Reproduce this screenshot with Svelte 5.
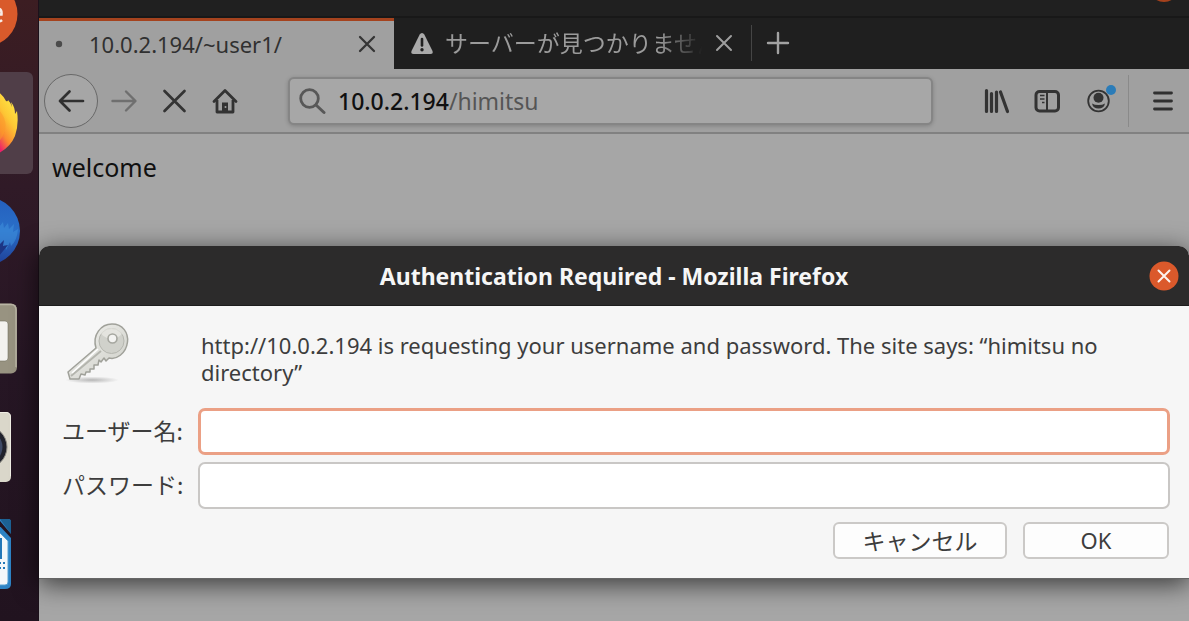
<script>
  let username = $state('');
  let password = $state('');
</script>

<div class="desktop">
  <nav class="dock" aria-label="Dock">
    <button aria-label="Software">
      <svg width="39" height="66" viewBox="0 0 39 66">
        <circle cx="-15" cy="14" r="32.5" fill="#d95a2b" />
        <path d="M-2 8.500Q2 9 1.500 14.500H-3M-3 21.500Q0 22 2 20" fill="none" stroke="#f7ece6" stroke-width="2.500" />
      </svg>
    </button>
    <button class="current" aria-label="Firefox">
      <svg width="33" height="102" viewBox="0 0 33 102">
        <defs>
          <linearGradient id="flame" x1=".8" y1="0" x2=".3" y2="1">
            <stop offset="0" stop-color="#fff04a" />
            <stop offset=".45" stop-color="#fdc835" />
            <stop offset=".75" stop-color="#fb8a30" />
            <stop offset="1" stop-color="#ec1f6b" />
          </linearGradient>
        </defs>
        <path d="M-3 19Q3 23 6 29Q8 30 8 28Q11 31 12 35L11 30Q15 35 15 42L17 39Q19 53 15 64Q10 76 -3 82Z" fill="url(#flame)" />
        <path d="M-2 37Q9 49 4 61Q2 67 -2 70Z" fill="#fc9a29" opacity=".55" />
      </svg>
    </button>
    <button aria-label="Thunderbird">
      <svg width="39" height="102" viewBox="0 0 39 102">
        <defs>
          <linearGradient id="bird" x1="0" y1="0" x2="0" y2="1">
            <stop offset="0" stop-color="#245fbd" />
            <stop offset=".5" stop-color="#2a6fc8" />
            <stop offset="1" stop-color="#1f3f98" />
          </linearGradient>
        </defs>
        <circle cx="-14" cy="51" r="34" fill="url(#bird)" />
        <path d="M-1 47L3 42L4 48L8 43L9 49L14 44L13 52L18 49Q17 61 11 66L10 62L6 70L5 65L-1 73Z" fill="#3d8edb" opacity=".6" />
        <path d="M-1 65L4 60L3 66L8 65L-1 76Z" fill="#1c3585" />
      </svg>
    </button>
    <button aria-label="Files">
      <svg width="39" height="102" viewBox="0 0 39 102">
        <rect x="-20" y="15.500" width="37" height="70" rx="6" fill="#989381" />
        <path d="M-1 16.500H11Q16 16.500 16 22V79" fill="none" stroke="#b8b4a4" stroke-width="1.500" />
        <rect x="-20" y="33" width="28" height="40" rx="3" fill="#f3f2ef" stroke="#777363" stroke-width=".6" />
      </svg>
    </button>
    <button aria-label="Rhythmbox">
      <svg width="39" height="102" viewBox="0 0 39 102">
        <rect x="-30" y="16" width="41" height="70" rx="5" fill="#dad7ca" />
        <path d="M-1 16.500H6Q10.500 16.500 10.500 21V80" fill="none" stroke="#efede4" />
        <circle cx="-14" cy="51" r="21" fill="#20222c" stroke="#8e8c84" />
        <circle cx="-14" cy="51" r="16.500" fill="#3d4965" />
      </svg>
    </button>
    <button aria-label="LibreOffice Writer">
      <svg width="39" height="102" viewBox="0 0 39 102">
        <path d="M-2 15H8Q11 15 11 18V80Q11 85 5 85H-2Z" fill="#2d83c5" />
        <path d="M0 15H8Q11 15 11 18V30Z" fill="#1c6193" />
        <path d="M-2 20L11 34V30L0 17" fill="#241420" />
        <path d="M-2 27L8 37V78Q8 81 5 81H-2Z" fill="#f3f7fa" stroke="#57a1d4" />
        <path d="M-1 35H1V55M-1 59H1M3 59H5M-1 64H1M3 64H5" fill="none" stroke="#2377b8" stroke-width="2" />
      </svg>
    </button>
  </nav>

  <main class="browser">
    <div class="titlebar"><i></i></div>

    <div class="tabs">
      <div class="tab active">
        <svg class="favicon" width="24" height="24" viewBox="0 0 24 24"><circle cx="12" cy="12" r="3.200" fill="#4b4b4b" /></svg>
        <span class="name">10.0.2.194/~user1/</span>
        <button aria-label="Close tab">
          <svg width="24" height="24" viewBox="0 0 24 24"><path d="M5 5L19 19M19 5L5 19" stroke="#353535" stroke-width="2.300" stroke-linecap="round" /></svg>
        </button>
      </div>
      <div class="tab failed">
        <svg class="favicon" width="24" height="24" viewBox="0 0 24 24">
          <path d="M12 2Q13.500 2 14.300 3.500L22.500 20Q23.500 23 20.500 23H3.500Q.5 23 1.500 20L9.700 3.500Q10.500 2 12 2Z" fill="#aaa" />
          <path d="M12 8V14.500" stroke="#202020" stroke-width="2.600" stroke-linecap="round" />
          <circle cx="12" cy="18.700" r="1.700" fill="#202020" />
        </svg>
        <span class="name">サーバーが見つかりません</span>
        <button aria-label="Close tab">
          <svg width="24" height="24" viewBox="0 0 24 24"><path d="M5 5L19 19M19 5L5 19" stroke="#9e9e9e" stroke-width="2" stroke-linecap="round" /></svg>
        </button>
      </div>
      <button class="new-tab" aria-label="New tab">
        <svg width="24" height="24" viewBox="0 0 24 24"><path d="M12 2V22M2 12H22" stroke="#a2a2a2" stroke-width="2.400" stroke-linecap="round" /></svg>
      </button>
    </div>

    <div class="toolbar">
      <button class="back" aria-label="Back">
        <svg width="28" height="28" viewBox="0 0 28 28"><path d="M26 14H3M12.500 4.500L3 14L12.500 23.500" fill="none" stroke="#303030" stroke-width="2.700" stroke-linecap="round" stroke-linejoin="round" /></svg>
      </button>
      <button class="tool" aria-label="Forward">
        <svg width="28" height="28" viewBox="0 0 28 28"><path d="M2.500 14H25M16 4.500L25.500 14L16 23.500" fill="none" stroke="#6f6f6f" stroke-width="2.400" stroke-linecap="round" stroke-linejoin="round" /></svg>
      </button>
      <button class="tool" aria-label="Stop">
        <svg width="28" height="28" viewBox="0 0 28 28"><path d="M3.500 4L23.500 24M23.500 4L3.500 24" stroke="#333" stroke-width="2.700" stroke-linecap="round" /></svg>
      </button>
      <button class="tool" aria-label="Home">
        <svg width="28" height="28" viewBox="0 0 28 28">
          <path d="M2 14.500L13 3.500L24 14.500" fill="none" stroke="#333" stroke-width="2.800" stroke-linecap="round" stroke-linejoin="round" />
          <path d="M5 13V25H21V13" fill="none" stroke="#333" stroke-width="2.800" stroke-linejoin="round" />
          <path d="M10 25V15.500H16V25Z" fill="#333" />
          <circle cx="13.500" cy="20" r="1" fill="#a0a0a0" />
        </svg>
      </button>
      <div class="url" role="search">
        <svg width="28" height="28" viewBox="0 0 28 28"><circle cx="11.500" cy="11.500" r="8.800" fill="none" stroke="#585858" stroke-width="2.800" /><path d="M18 18L26 25.500" stroke="#585858" stroke-width="3" stroke-linecap="round" /></svg>
        <span><b>10.0.2.194</b>/himitsu</span>
      </div>
      <button class="tool" aria-label="Library">
        <svg width="28" height="28" viewBox="0 0 28 28"><path d="M3.500 3.500V24.500M8.500 6.500V24.500M13.500 5V24.500M17.500 5L24.500 24.500" fill="none" stroke="#333" stroke-width="3.200" stroke-linecap="round" /></svg>
      </button>
      <button class="tool" aria-label="Sidebars">
        <svg width="28" height="28" viewBox="0 0 28 28">
          <rect x="2" y="4.500" width="22.500" height="19.500" rx="3.500" fill="none" stroke="#333" stroke-width="3" />
          <path d="M13 4V24" stroke="#333" stroke-width="2" />
          <path d="M6 8.500H10.500M6 12H10.500M8 15.500H10.500" stroke="#333" stroke-width="1.500" />
        </svg>
      </button>
      <button class="tool account" aria-label="Account">
        <svg width="28" height="28" viewBox="0 0 28 28">
          <circle cx="13.500" cy="14" r="10.300" fill="none" stroke="#333" stroke-width="1.800" />
          <circle cx="13.500" cy="10.800" r="5" fill="#333" />
          <path d="M7 16.500Q9.500 18 13.500 18Q17.500 18 20 16.500Q19 21.500 13.500 21.500Q8 21.500 7 16.500Z" fill="#333" />
        </svg>
        <i class="badge"></i>
      </button>
      <button class="tool menu" aria-label="Menu">
        <svg width="28" height="28" viewBox="0 0 28 28"><path d="M5.500 6H22.500M5.500 14H22.500M5.500 22H22.500" stroke="#303030" stroke-width="2.800" stroke-linecap="round" /></svg>
      </button>
    </div>

    <p class="page">welcome</p>

    <form class="dialog" onsubmit={(e) => e.preventDefault()}>
      <header>
        <h1>Authentication Required - Mozilla Firefox</h1>
        <button type="button" aria-label="Close">
          <svg width="30" height="30" viewBox="0 0 30 30"><circle cx="15" cy="15" r="14.500" fill="#db592b" /><path d="M9.500 9.500L20.500 20.500M20.500 9.500L9.500 20.500" stroke="#fdf3ee" stroke-width="2" stroke-linecap="round" /></svg>
        </button>
      </header>
      <div class="message">
        <svg width="68" height="64" viewBox="0 0 68 64">
          <defs>
            <linearGradient id="metal" x1="0" y1="0" x2="1" y2="1">
              <stop offset="0" stop-color="#f4f4f1" />
              <stop offset="1" stop-color="#cbccc5" />
            </linearGradient>
            <radialGradient id="shade">
              <stop offset="0" stop-color="#777" stop-opacity=".5" />
              <stop offset="1" stop-color="#777" stop-opacity="0" />
            </radialGradient>
          </defs>
          <ellipse cx="29" cy="58" rx="27" ry="3.500" fill="url(#shade)" />
          <path d="M33 26C29 13 38 2 49 2C60 2 65.500 11 64.500 20C63 32 53 38 46 36L43 39L41 36L38 40L36 38L35 43L31 43L31 47L27 47L27 50L23 50L22 53L18 52L16 57L7 57L5 50Z" fill="url(#metal)" stroke="#a0a19a" stroke-width="1.500" stroke-linejoin="round" />
          <circle cx="48.500" cy="19" r="12.500" fill="#d0d1cb" stroke="#b5b6af" />
          <path d="M38 12Q49 22 59 12Q56 6 48 6Q40 7 38 12Z" fill="#eeeeea" opacity=".65" />
          <circle cx="49.500" cy="16.500" r="4.500" fill="#f3f3f1" stroke="#a5a69f" stroke-width="1.600" />
          <path d="M8 54L38 29" stroke="#b4b5ae" stroke-width="2" />
          <path d="M9 51L35 27" stroke="#fff" stroke-width="1.500" />
        </svg>
        <p>http://10.0.2.194 is requesting your username and password. The site says: “himitsu no directory”</p>
      </div>
      <div class="fields">
        <label for="user">ユーザー名:</label>
        <input id="user" class="focused" type="text" autocomplete="off" bind:value={username} />
        <label for="pass">パスワード:</label>
        <input id="pass" type="password" autocomplete="off" bind:value={password} />
      </div>
      <div class="actions">
        <button type="button" class="cancel">キャンセル</button>
        <button type="submit" class="ok">OK</button>
      </div>
    </form>
  </main>
</div>

<style>
  :global(body) { margin: 0; background: #a6a6a6; }
  * { box-sizing: border-box; }
  button { padding: 0; border: 0; background: none; font: inherit; color: inherit; }
  svg { display: block; flex: none; }
  .desktop {
    display: flex;
    min-height: 100vh;
    overflow: hidden;
    font: 22px/28px "Noto Sans", "Noto Sans CJK JP", sans-serif;
    color: #3d3d3d;
  }
  .dock {
    display: flex;
    flex: 0 0 39px;
    flex-direction: column;
    align-items: flex-start;
    gap: 6px;
    overflow: hidden;
    background: linear-gradient(#3c1d22, #301a27 30%, #261624 60%, #21131f);
    border-right: 1px solid #1c111b;
  }
  .dock svg { overflow: hidden; }
  .current { background: #503e48; border-radius: 0 6px 6px 0; }
  .browser {
    position: relative;
    display: flex;
    flex: 1;
    min-width: 0;
    flex-direction: column;
    background: #a6a6a6;
  }
  .titlebar {
    display: flex;
    justify-content: flex-end;
    height: 18px;
    padding-right: 10px;
    overflow: hidden;
    background: #202020;
    border-bottom: 2px solid #181818;
  }
  .titlebar i { width: 30px; height: 30px; margin-top: -28px; border-radius: 50%; background: #a5411c; }
  .tabs { display: flex; height: 51px; background: #1f1f1f; }
  .tab { display: flex; align-items: center; width: 355px; padding: 0 15px 3px 8px; }
  .tab .name { flex: 1; min-width: 0; overflow: hidden; white-space: nowrap; }
  .active { background: #a0a0a0; border-top: 3px solid #a5431e; color: #303030; }
  .active .name { margin-left: 18px; }
  .failed {
    width: 357px;
    padding: 0 15px 2px 16px;
    color: #9b9b9b;
    font-size: 23px;
    font-family: "Noto Sans CJK JP", sans-serif;
  }
  .failed .name {
    margin: 0 7px 2px 11px;
    mask-image: linear-gradient(90deg, #000 82%, transparent 99%);
  }
  .new-tab { display: flex; align-items: center; height: 36px; margin-top: 7px; padding-left: 14px; border-left: 1px solid #454545; }
  .toolbar {
    display: flex;
    align-items: center;
    height: 65px;
    padding-left: 5px;
    background: #a0a0a0;
    border-bottom: 2px solid #818181;
  }
  .back {
    display: grid;
    flex: none;
    place-items: center;
    width: 54px;
    height: 54px;
    border: 1px solid #686868;
    border-radius: 50%;
    background: #a6a6a6;
  }
  .tool { display: grid; flex: none; place-items: center; width: 51px; height: 52px; }
  .url {
    display: flex;
    flex: 1;
    align-items: center;
    gap: 12px;
    min-width: 0;
    height: 48px;
    margin: 0 38px 0 37px;
    padding-left: 8px;
    border: 2px solid #858585;
    border-radius: 6px;
    background: #a7a7a7;
    box-shadow: 0 1px 4px #0003;
    color: #555;
    font-size: 23px;
  }
  .url b { font-weight: 500; color: #101010; }
  .account { position: relative; }
  .badge { position: absolute; top: 10px; right: 8px; width: 10px; height: 10px; border-radius: 50%; background: #2b7cb8; }
  .menu { width: 61px; margin-left: 4px; padding-left: 8px; border-left: 1px solid #8a8a8a; }
  .page { margin: 0; padding: 19px 13px; font-size: 25px; color: #101010; }
  .dialog {
    position: absolute;
    top: 246px;
    right: 0;
    left: 0;
    background: #f6f6f6;
    border-bottom: 1px solid #666;
    border-radius: 10px 10px 0 0;
    box-shadow: 0 5px 26px #000a;
  }
  header {
    display: grid;
    grid-template-columns: 40px 1fr 40px;
    align-items: center;
    height: 60px;
    border-bottom: 1px solid #1d1d1d;
    border-radius: 10px 10px 0 0;
    background: #2c2b2b;
    color: #f6f6f6;
  }
  h1 { grid-column: 2; margin: 0; font-size: 23px; font-weight: 700; line-height: 28px; text-align: center; }
  .message { display: flex; gap: 70px; padding: 16px 20px 0 24px; }
  .message p { flex: 1; margin: 0; padding-top: 10px; line-height: 27px; }
  .fields {
    display: grid;
    grid-template-columns: 122px 1fr;
    gap: 7px 14px;
    align-items: center;
    padding: 22px 19px 0 23px;
  }
  label { padding-bottom: 4px; font-size: 23px; white-space: nowrap; }
  label, .cancel { font-family: "Noto Sans CJK JP", sans-serif; }
  input {
    width: 100%;
    height: 47px;
    padding: 0 10px;
    border: 2px solid #c9c7c5;
    border-radius: 7px;
    outline: 0;
    background: #fff;
    color: #333;
    font: inherit;
  }
  .focused { border: 3px solid #eba085; }
  .actions { display: flex; justify-content: flex-end; gap: 16px; padding: 13px 20px 19px; }
  .actions button { height: 37px; padding-bottom: 2px; border: 2px solid #cbc9c7; border-radius: 6px; background: #fdfdfd; line-height: 28px; }
  .actions .cancel { width: 174px; font-size: 23px; }
  .actions .ok { width: 146px; }
</style>
